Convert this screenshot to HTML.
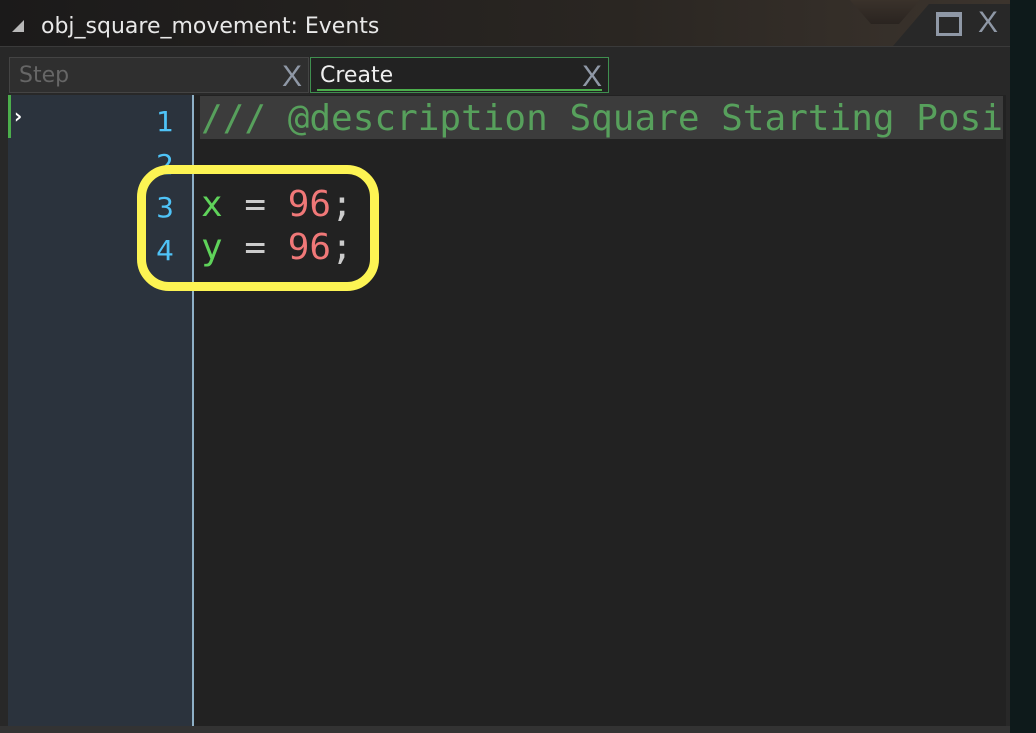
<!DOCTYPE html>
<html><head><meta charset="utf-8"><style>
*{margin:0;padding:0;box-sizing:border-box}
body{width:1036px;height:733px;overflow:hidden;background:#0f1a1b;font-family:"DejaVu Sans","Liberation Sans",sans-serif;position:relative}
.title{position:absolute;left:0;top:0;width:1036px;height:46px;background:linear-gradient(90deg,#1b1a1a,#2a2622 60%,#3d352e)}
.title span{position:absolute;left:41px;top:14px;color:#e8e8e8;font-size:22px}
.tri{position:absolute;left:12px;top:20px;width:0;height:0;border-left:12px solid transparent;border-bottom:12px solid #b8b8b8}
.win{position:absolute;left:0;top:46px;width:1010px;height:687px;background:#282828;border-top:1px solid #3a3a3a}
.tab{position:absolute;top:57px;height:36px;border:1px solid #444;background:#2f2f2f;font-size:22px;padding:5px 9px}
.x{position:absolute;right:6px;top:2px;color:#8f98a6;font-size:30px;font-family:"Liberation Sans",sans-serif}
.gut{position:absolute;left:8px;top:95px;width:184px;height:631px;background:#2b333d}
.gbar{position:absolute;left:8px;top:95px;width:3px;height:43px;background:#4cae4c}
.div{position:absolute;left:192px;top:95px;width:2px;height:631px;background:#8eb0c6}
.code{position:absolute;left:194px;top:95px;width:812px;height:631px;background:#222}
.ln{position:absolute;left:136px;width:38px;text-align:right;color:#4fc3f7;font-family:"DejaVu Sans",sans-serif;font-size:28px}
.cl{position:absolute;left:201px;font-family:"DejaVu Sans Mono","Liberation Mono",monospace;font-size:36px;line-height:43px;white-space:pre;color:#ccc}
</style></head><body>
<div class="title"><div class="tri"></div><span>obj_square_movement: Events</span>
<div style="position:absolute;left:850px;top:0;width:70px;height:24px;background:linear-gradient(#3a322b,#2a2420);clip-path:polygon(0 0,100% 0,70% 100%,30% 100%)"></div>
<div style="position:absolute;left:893px;top:4px;width:120px;height:42px;background:#282828;clip-path:polygon(30% 0,100% 0,100% 100%,0 100%)"></div>
<div style="position:absolute;left:936px;top:12px;width:26px;height:24px;border:3px solid #8f98a6;border-top-width:5px"></div>
<div style="position:absolute;left:978px;top:6px;color:#8f98a6;font-size:30px;font-family:'Liberation Sans',sans-serif">X</div>
</div>
<div class="win"></div>
<div style="position:absolute;left:1010px;top:0;width:26px;height:733px;background:#0e1a1b"></div>
<div class="tab" style="left:9px;width:300px;color:#666">Step<span class="x">X</span></div>
<div class="tab" style="left:310px;width:299px;color:#eee;background:#222;border-color:#3f8f4f">Create<span class="x">X</span><div style="position:absolute;left:6px;right:6px;bottom:1px;height:2px;background:#4cae4c"></div></div>
<div class="gut"></div><div class="gbar"></div>
<div style="position:absolute;left:14px;top:104px;color:#fff;font-size:20px;font-weight:bold">›</div>
<div class="div"></div>
<div class="code"></div>
<div style="position:absolute;left:200px;top:96px;width:803px;height:43px;background:#3c3c3c"></div>
<div style="position:absolute;left:0;top:726px;width:1010px;height:7px;background:#333"></div>
<div class="ln" style="top:105px">1</div>
<div class="ln" style="top:148px">2</div>
<div class="ln" style="top:191px">3</div>
<div class="ln" style="top:234px">4</div>
<div class="cl" style="top:97px;color:#57a05c">/// @description Square Starting Posi</div>
<div class="cl" style="top:183px"><span style="color:#5fd35a">x</span> = <span style="color:#f07878">96</span>;</div>
<div class="cl" style="top:226px"><span style="color:#5fd35a">y</span> = <span style="color:#f07878">96</span>;</div>
<div style="position:absolute;left:137px;top:165px;width:242px;height:126px;border:9px solid #fdf453;border-radius:32px"></div>
</body></html>
